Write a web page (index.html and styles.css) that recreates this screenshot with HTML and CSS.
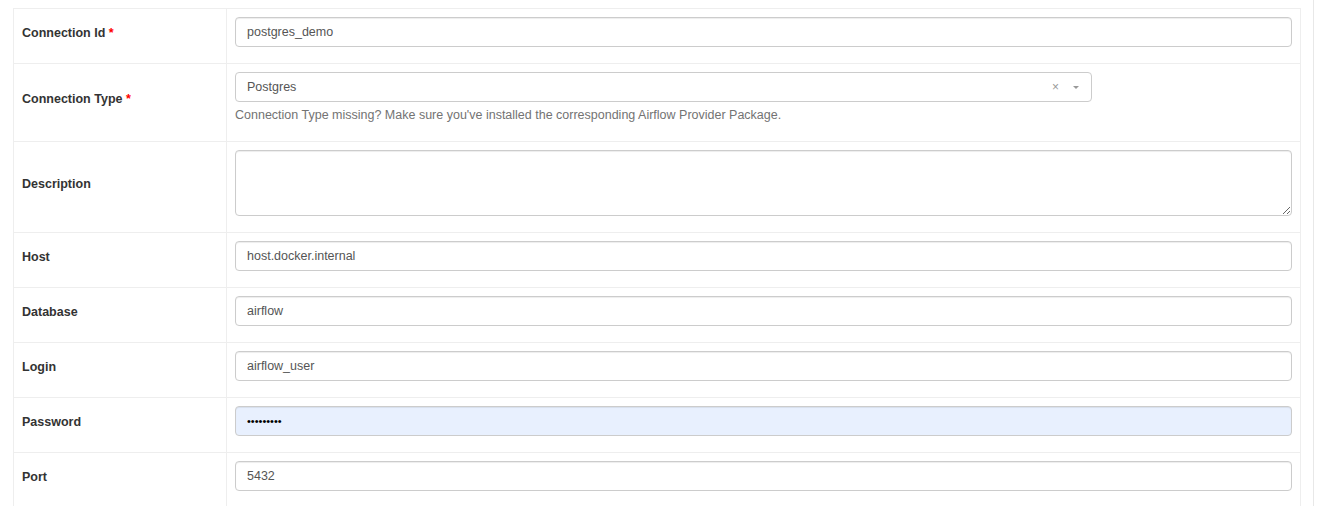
FILE: index.html
```html
<!DOCTYPE html>
<html>
<head>
<meta charset="utf-8">
<link rel="stylesheet" href="styles.css">
</head>
<body>
<div class="page">
  <table class="form-table">
    <tr>
      <td class="label-cell"><label>Connection Id <span class="req">*</span></label></td>
      <td class="field-cell"><div class="field"><input class="input" type="text" value="postgres_demo"></div></td>
    </tr>
    <tr>
      <td class="label-cell"><label>Connection Type <span class="req">*</span></label></td>
      <td class="field-cell">
        <div class="field">
          <div class="select">
            <span class="select-value">Postgres</span>
            <span class="select-clear">×</span>
            <span class="select-caret"></span>
          </div>
          <p class="help">Connection Type missing? Make sure you've installed the corresponding Airflow Provider Package.</p>
        </div>
      </td>
    </tr>
    <tr>
      <td class="label-cell"><label>Description</label></td>
      <td class="field-cell"><div class="field"><textarea class="textarea"></textarea></div></td>
    </tr>
    <tr>
      <td class="label-cell"><label>Host</label></td>
      <td class="field-cell"><div class="field"><input class="input" type="text" value="host.docker.internal"></div></td>
    </tr>
    <tr>
      <td class="label-cell"><label>Database</label></td>
      <td class="field-cell"><div class="field"><input class="input" type="text" value="airflow"></div></td>
    </tr>
    <tr>
      <td class="label-cell"><label>Login</label></td>
      <td class="field-cell"><div class="field"><input class="input" type="text" value="airflow_user"></div></td>
    </tr>
    <tr>
      <td class="label-cell"><label>Password</label></td>
      <td class="field-cell"><div class="field"><input class="input input-autofill" type="password" value="secret123"></div></td>
    </tr>
    <tr>
      <td class="label-cell"><label>Port</label></td>
      <td class="field-cell"><div class="field"><input class="input" type="text" value="5432"></div></td>
    </tr>
  </table>
  <div class="side-rule"></div>
</div>
</body>
</html>
```

FILE: styles.css
```css
html, body {
  margin: 0;
  padding: 0;
  background: #fff;
  height: 100%;
  overflow: hidden;
}
body {
  font-family: "Liberation Sans", Arial, sans-serif;
  font-size: 12.5px;
  color: #333;
}
.page {
  display: flex;
  align-items: flex-start;
  padding: 8px 0 0 13px;
  height: 100%;
  box-sizing: border-box;
}
.form-table {
  border-collapse: collapse;
  width: 1288px;
  flex: none;
}
.form-table td {
  border: 1px solid #eee;
  padding: 8px;
}
.label-cell {
  width: 196px;
  vertical-align: middle;
}
.label-cell label {
  display: inline-block;
  font-weight: bold;
  margin-bottom: 7px;
  color: #333;
}
.req {
  color: #f00;
}
.field-cell {
  vertical-align: top;
}
.field {
  padding-bottom: 8px;
}
.input {
  display: block;
  box-sizing: border-box;
  width: 100%;
  height: 30px;
  padding: 5px 11px;
  font-family: "Liberation Sans", Arial, sans-serif;
  font-size: 12.5px;
  color: #555;
  border: 1px solid #ccc;
  border-radius: 4px;
  background: #fff;
  box-shadow: inset 0 1px 1px rgba(0,0,0,0.075);
  outline: none;
}
.input-autofill {
  background: #e8f0fe;
  color: #000;
  font-size: 11px;
}
.textarea {
  display: block;
  box-sizing: border-box;
  width: 100%;
  height: 66px;
  border: 1px solid #ccc;
  border-radius: 4px;
  box-shadow: inset 0 1px 1px rgba(0,0,0,0.075);
  resize: vertical;
  font-family: "Liberation Sans", Arial, sans-serif;
  font-size: 12.5px;
  margin: 0;
}
.select {
  display: flex;
  align-items: center;
  box-sizing: border-box;
  width: 857px;
  height: 30px;
  padding: 0 12px 0 11px;
  border: 1px solid #ccc;
  border-radius: 4px;
  color: #555;
}
.select-value {
  flex: 1;
}
.select-clear {
  color: #999;
  font-size: 12px;
  margin-right: 14px;
}
.select-caret {
  width: 0;
  height: 0;
  border-left: 3px solid transparent;
  border-right: 3px solid transparent;
  border-top: 3px solid #999;
  margin-top: 1px;
}
.help {
  margin: 4px 0 1px;
  line-height: 18px;
  color: #737373;
  font-size: 12.5px;
}
.side-rule {
  width: 1px;
  background: #e8e8e8;
  align-self: stretch;
  margin: -8px 0 0 12px;
}
```
